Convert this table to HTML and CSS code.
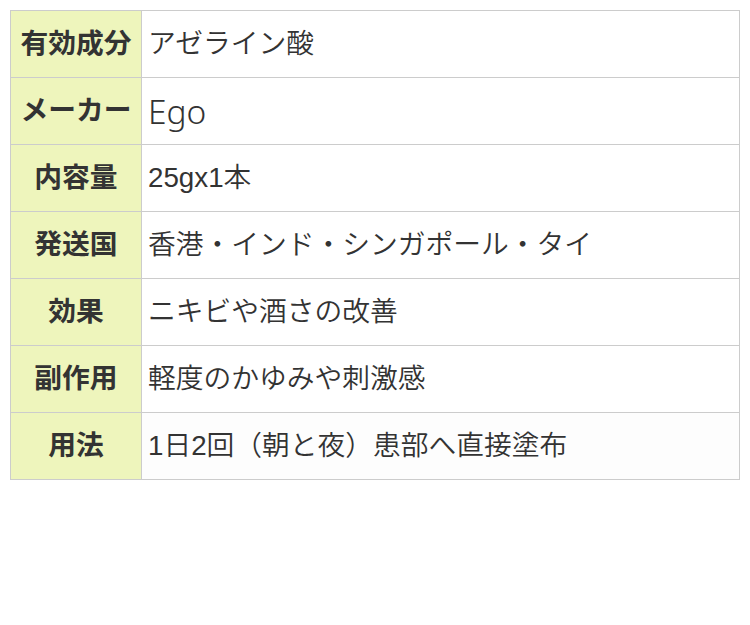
FILE: index.html
```html
<!DOCTYPE html>
<html lang="ja">
<head>
<meta charset="utf-8">
<link rel="stylesheet" href="styles.css">
</head>
<body>
<table class="spec">
<tr><th>有効成分</th><td>アゼライン酸</td></tr>
<tr><th>メーカー</th><td><span class="brand">Ego</span></td></tr>
<tr><th>内容量</th><td>25gx1本</td></tr>
<tr><th>発送国</th><td>香港・インド・シンガポール・タイ</td></tr>
<tr><th>効果</th><td>ニキビや酒さの改善</td></tr>
<tr><th>副作用</th><td>軽度のかゆみや刺激感</td></tr>
<tr><th>用法</th><td>1日2回（朝と夜）患部へ直接塗布</td></tr>
</table>
</body>
</html>
```
FILE: styles.css
```css
body {
  margin: 10px;
  background: #fff;
  font-family: "Liberation Sans", "Noto Sans CJK JP", sans-serif;
  color: #333;
}
.spec {
  border-collapse: collapse;
  width: 730px;
  font-size: 27.75px;
}
.spec th, .spec td {
  border: 1px solid #cccccc;
  height: 66px;
  box-sizing: border-box;
  padding: 0 6px;
  line-height: 1.5;
}
.spec tr {
  height: 67px;
}
.spec th {
  width: 131px;
  background: #eef5bc;
  font-weight: bold;
  text-align: center;
  white-space: nowrap;
  padding: 0 9px;
}
.spec td {
  text-align: left;
  background: #fff;
  font-weight: 350;
}
.spec tr:last-child td {
  background: #fdfdfd;
}
.brand {
  font-family: "Noto Sans", sans-serif;
  font-weight: 300;
  font-size: 33.5px;
}
```
